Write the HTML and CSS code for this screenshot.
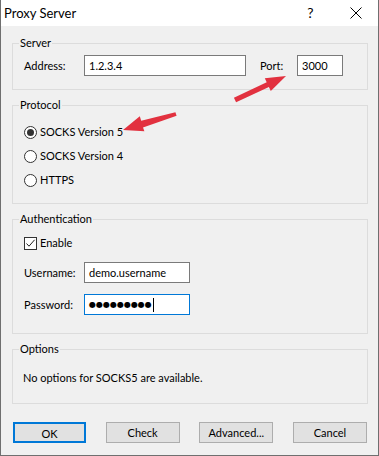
FILE: index.html
```html
<!DOCTYPE html>
<html>
<head>
<meta charset="utf-8">
<link rel="stylesheet" href="styles.css">
</head>
<body>
<div class="window">
  <div class="titlebar">
    <span class="title">Proxy Server</span>
    <span class="tb-btn help">?</span>
    <span class="tb-btn close"><svg width="12" height="12" viewBox="0 0 12 12"><path d="M0.5 0.5 L11.5 11.5 M11.5 0.5 L0.5 11.5" stroke="#000" stroke-width="1" fill="none"/></svg></span>
  </div>
  <div class="content">
    <div class="group g-server">
      <span class="legend">Server</span>
      <div class="field-row">
        <span class="lbl">Address:</span>
        <div class="input in-addr">1.2.3.4</div>
        <span class="lbl lbl-port">Port:</span>
        <div class="input in-port">3000</div>
      </div>
    </div>
    <div class="group g-protocol">
      <span class="legend">Protocol</span>
      <div class="opt-row"><span class="radio checked"></span><span>SOCKS Version 5</span></div>
      <div class="opt-row"><span class="radio"></span><span>SOCKS Version 4</span></div>
      <div class="opt-row"><span class="radio"></span><span>HTTPS</span></div>
    </div>
    <div class="group g-auth">
      <span class="legend">Authentication</span>
      <div class="opt-row"><span class="checkbox"><svg width="11" height="11" viewBox="0 0 11 11"><path d="M1.5 5.5 L4 8.2 L9.6 1.8" stroke="#222" stroke-width="1" fill="none"/></svg></span><span>Enable</span></div>
      <div class="field-row user-row">
        <span class="lbl">Username:</span>
        <div class="input in-user">demo.username</div>
      </div>
      <div class="field-row pass-row">
        <span class="lbl">Password:</span>
        <div class="input in-user focused"><span class="dots">●●●●●●●●●</span><span class="caret"></span></div>
      </div>
    </div>
    <div class="group g-options">
      <span class="legend">Options</span>
      <div class="opt-text">No options for SOCKS5 are available.</div>
    </div>
    <div class="buttons">
      <button class="btn default">OK</button>
      <button class="btn">Check</button>
      <button class="btn">Advanced...</button>
      <button class="btn">Cancel</button>
    </div>
  </div>
  <svg class="arrows" width="379" height="456" viewBox="0 0 379 456">
    <polygon fill="#e2313f" points="233.9,97.7 266.7,82.3 264.8,78.2 286,76 270.8,91.0 268.9,86.9 236.1,102.3"/>
    <polygon fill="#e2313f" points="175.4,112.2 141.2,120.8 139.8,116.3 123,130 144.4,131.3 143.0,127.6 176.6,115.8"/>
  </svg>
</div>
</body>
</html>
```
FILE: styles.css
```css
* { box-sizing: border-box; }
html, body { margin: 0; padding: 0; }
body {
  font-family: Lato, "Noto Sans", sans-serif;
  font-size: 11px;
  line-height: 16px;
  color: #000;
  background: #f0f0f0;
}
.window {
  position: relative;
  width: 379px;
  height: 456px;
  background: #f0f0f0;
  border: 1px solid #6f6f6f;
  border-top: none;
  overflow: hidden;
}
.titlebar {
  height: 26px;
  background: #fff;
  display: flex;
  align-items: center;
}
.title {
  flex: 1;
  padding-left: 3px;
  font-size: 13px;
}
.tb-btn {
  width: 45px;
  height: 26px;
  display: flex;
  align-items: center;
  justify-content: center;
}
.help { font-size: 14px; }
.close svg { display: block; }
.content {
  padding: 17px 10px 0 11px;
}
.group {
  position: relative;
  border: 1px solid #dcdcdc;
  margin-bottom: 15px;
}
.legend {
  position: absolute;
  top: -9px;
  left: 6px;
  padding: 0 1px;
  background: #f0f0f0;
  line-height: 16px;
}
.g-server { height: 47px; padding: 11px 0 0 11px; }
.g-protocol { height: 99px; padding: 14px 0 0 11px; }
.g-auth { height: 115px; padding: 11px 0 0 11px; }
.g-options { height: 55px; padding: 20px 0 0 10px; margin-bottom: 18px; }
.field-row {
  display: flex;
  align-items: center;
  height: 21px;
}
.lbl { width: 60px; }
.lbl-port { width: 37px; margin-left: 14px; }
.input {
  height: 21px;
  border: 1px solid #7a7a7a;
  background: #fff;
  padding-left: 4px;
  line-height: 19px;
  display: flex;
  align-items: center;
}
.in-addr { width: 162px; }
.in-port { width: 46px; }
.in-user { width: 106px; }
.focused { border-color: #0078d7; }
.user-row { margin-top: 7px; }
.pass-row { margin-top: 11px; }
.dots {
  font-family: "DejaVu Sans", sans-serif;
  font-size: 8px;
  letter-spacing: 0;
}
.caret {
  display: inline-block;
  width: 1px;
  height: 14px;
  background: #000;
  margin-left: 1px;
}
.opt-row {
  display: flex;
  align-items: center;
  height: 24px;
  gap: 3px;
}
.radio {
  width: 13px;
  height: 13px;
  border: 1px solid #333;
  border-radius: 50%;
  background: #fff;
  display: flex;
  align-items: center;
  justify-content: center;
}
.radio.checked::after {
  content: "";
  width: 7px;
  height: 7px;
  border-radius: 50%;
  background: #333;
}
.checkbox {
  width: 13px;
  height: 13px;
  border: 1px solid #333;
  background: #fff;
}
.checkbox svg { display: block; }
.buttons {
  display: flex;
  justify-content: space-between;
  margin: 0 1px;
}
.btn {
  width: 74px;
  height: 21px;
  background: #e1e1e1;
  border: 1px solid #adadad;
  font-family: inherit;
  font-size: 11px;
  color: #000;
  padding: 0;
  line-height: 19px;
}
.btn.default { border: 2px solid #0078d7; width: 73px; }
.arrows {
  position: absolute;
  left: -1px;
  top: 0;
  pointer-events: none;
}
```
